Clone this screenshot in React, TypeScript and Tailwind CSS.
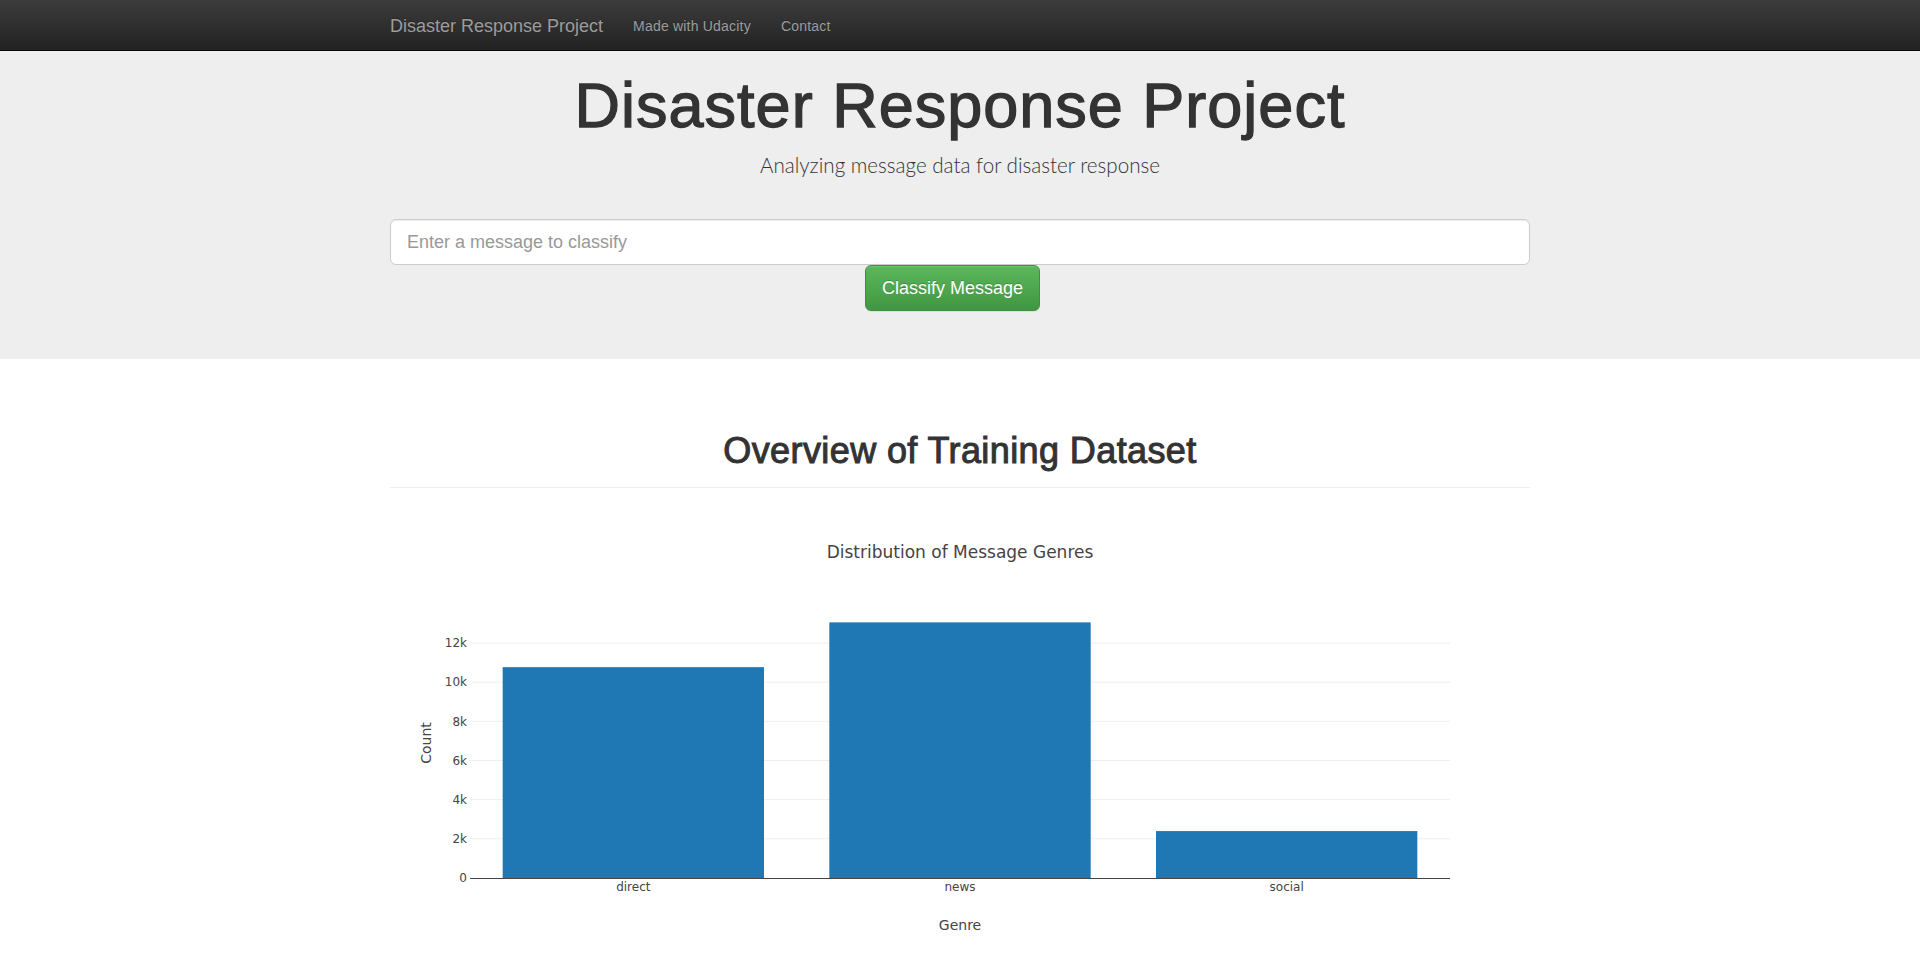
import React from 'react';

const genres = [
  { name: 'direct', count: 10766 },
  { name: 'news', count: 13054 },
  { name: 'social', count: 2396 },
];

const ticks = [0, 2000, 4000, 6000, 8000, 10000, 12000];

const GenreChart: React.FC = () => {
  const left = 80;
  const right = 1060;
  const zeroY = 370;
  const scale = 235 / 12000;
  const band = (right - left) / genres.length;
  const barW = band * 0.8;

  return (
    <svg width={1140} height={450} className="block" style={{ fontFamily: '"DejaVu Sans", Verdana, Arial, sans-serif' }}>
      <text x={570} y={50} textAnchor="middle" fontSize={17} fill="#444">
        Distribution of Message Genres
      </text>

      {ticks.slice(1).map(t => (
        <line key={t} x1={left} x2={right} y1={zeroY - t * scale} y2={zeroY - t * scale} stroke="#eee" strokeWidth={1} />
      ))}

      {genres.map((g, i) => {
        const h = g.count * scale;
        return (
          <rect key={g.name} x={left + i * band + (band - barW) / 2} y={zeroY - h} width={barW} height={h} fill="#1f77b4" />
        );
      })}

      <line x1={left} x2={right} y1={zeroY + 0.5} y2={zeroY + 0.5} stroke="#444" strokeWidth={1} />

      {ticks.map(t => (
        <text key={t} x={77} y={zeroY - t * scale + 4.2} textAnchor="end" fontSize={12} fill="#444">
          {t === 0 ? '0' : `${t / 1000}k`}
        </text>
      ))}

      {genres.map((g, i) => (
        <text key={g.name} x={left + i * band + band / 2} y={383} textAnchor="middle" fontSize={12} fill="#444">
          {g.name}
        </text>
      ))}

      <text x={570} y={422} textAnchor="middle" fontSize={14} fill="#444">Genre</text>
      <text x={41} y={235} textAnchor="middle" fontSize={14} fill="#444" transform="rotate(-90 41 235)">Count</text>
    </svg>
  );
};

const App: React.FC = () => {
  return (
    <div className="min-h-screen bg-white text-[#333] font-['Liberation_Sans',Arial,sans-serif] text-[14px] leading-[20px]">
      <nav className="h-[51px] border-b border-[#080808] bg-[linear-gradient(to_bottom,#3c3c3c_0%,#222_100%)]">
        <div className="w-[1170px] mx-auto px-[15px] pt-[2px] h-[50px] flex items-center">
          <a className="text-[18px] leading-[20px] text-[#9d9d9d] pr-[15px] [text-shadow:0_-1px_0_rgba(0,0,0,0.25)]">Disaster Response Project</a>
          <a className="px-[15px] tracking-[0.2px] text-[#9d9d9d] [text-shadow:0_-1px_0_rgba(0,0,0,0.25)]">Made with Udacity</a>
          <a className="px-[15px] tracking-[0.2px] text-[#9d9d9d] [text-shadow:0_-1px_0_rgba(0,0,0,0.25)]">Contact</a>
        </div>
      </nav>

      <section className="bg-[#eee] pt-[20px] pb-[48px]">
        <div className="w-[1140px] mx-auto flex flex-col items-center">
          <h1 className="text-[63px] leading-[69px] tracking-[1px] text-[#333] [-webkit-text-stroke:1.3px_#333]">Disaster Response Project</h1>
          <p className="mt-[10px] text-[20.6px] leading-[30px] font-light font-['Lato',sans-serif] text-[#333]">Analyzing message data for disaster response</p>
          <input
            type="text"
            placeholder="Enter a message to classify"
            className="mt-[39px] w-full h-[46px] px-[16px] text-[18px] bg-white border border-[#ccc] rounded-[6px] shadow-[inset_0_1px_1px_rgba(0,0,0,0.075)] placeholder:text-[#999] outline-none"
          />
          <button className="self-start ml-[475px] h-[46px] px-[16px] text-[18px] text-white rounded-[6px] border border-[#3e8f3e] bg-[linear-gradient(to_bottom,#5cb85c_0%,#419641_100%)] [text-shadow:0_-1px_0_rgba(0,0,0,0.2)] shadow-[inset_0_1px_0_rgba(255,255,255,0.15),0_1px_1px_rgba(0,0,0,0.075)]">
            Classify Message
          </button>
        </div>
      </section>

      <main className="w-[1140px] mx-auto">
        <div className="mt-[72px] pb-[16px] border-b border-[#eee]">
          <h1 className="text-[36px] leading-[39.6px] text-center tracking-[0.4px] text-[#333] [-webkit-text-stroke:1px_#333]">Overview of Training Dataset</h1>
        </div>
        <div className="mt-[20px]">
          <GenreChart />
        </div>
      </main>
    </div>
  );
};

export default App;
